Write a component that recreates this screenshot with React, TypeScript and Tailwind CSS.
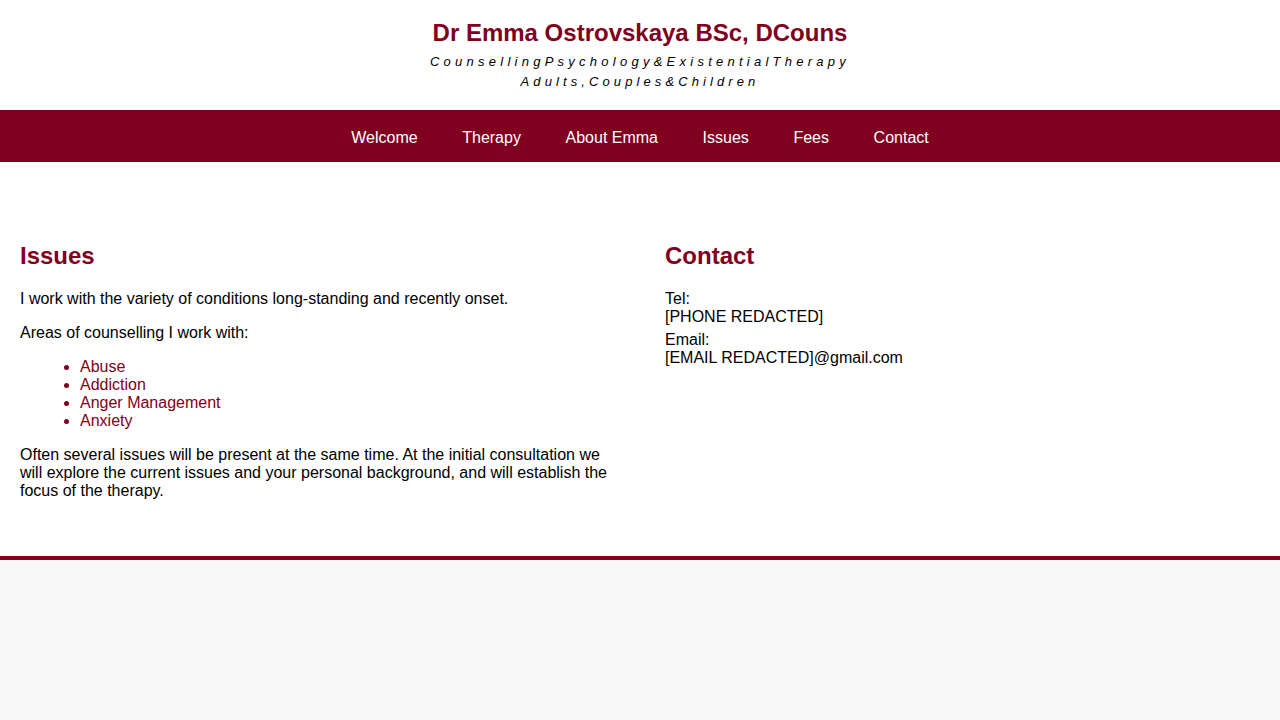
import React from "react";

const maroon = "text-[#800020]";

export default function App() {
  return (
    <div className="min-h-screen bg-[#f8f8f8] text-black" style={{ fontFamily: '"Liberation Sans", Arial, sans-serif' }}>
      <div className="bg-white border-b-4 border-[#800020]">
        <header className="pt-[18px] pb-[18px] text-center">
          <h1 className={`text-[24px] leading-[30px] font-bold ${maroon}`}>Dr Emma Ostrovskaya BSc, DCouns</h1>
          <p className="mt-[4px] text-[13px] leading-[20px] italic tracking-[4.25px] [word-spacing:-7.85px]">Counselling Psychology &amp; Existential Therapy</p>
          <p className="text-[13px] leading-[20px] italic tracking-[4.1px] [word-spacing:-7.7px]">Adults, Couples &amp; Children</p>
        </header>
        <nav className="bg-[#800020] h-[52px] pt-[4px] flex justify-center items-center">
          {["Welcome", "Therapy", "About Emma", "Issues", "Fees", "Contact"].map((t) => (
            <a key={t} href="#" className="px-[22.3px] text-white text-[16px] leading-[18px]">
              {t}
            </a>
          ))}
        </nav>
        <main className="px-5 pt-[60px] pb-[40px] grid grid-cols-2 gap-[50px] text-[16px] leading-[18px]">
          <section>
            <h2 className={`mt-[20px] text-[24px] leading-[28px] font-bold mb-[20px] ${maroon}`}>Issues</h2>
            <p className="mb-4">I work with the variety of conditions long-standing and recently onset.</p>
            <p className="mb-4">Areas of counselling I work with:</p>
            <ul className={`list-disc pl-[60px] mb-4 ${maroon}`}>
              <li>Abuse</li>
              <li>Addiction</li>
              <li>Anger Management</li>
              <li>Anxiety</li>
            </ul>
            <p className="mb-4">
              Often several issues will be present at the same time. At the initial consultation we will explore the current issues and your personal background, and will establish the focus of the therapy.
            </p>
          </section>
          <section>
            <h2 className={`mt-[20px] text-[24px] leading-[28px] font-bold mb-[20px] ${maroon}`}>Contact</h2>
            <p className="mb-[5px]">
              Tel:
              <br />
              [PHONE REDACTED]
            </p>
            <p>
              Email:
              <br />
              [EMAIL REDACTED]@gmail.com
            </p>
          </section>
        </main>
      </div>
    </div>
  );
}
